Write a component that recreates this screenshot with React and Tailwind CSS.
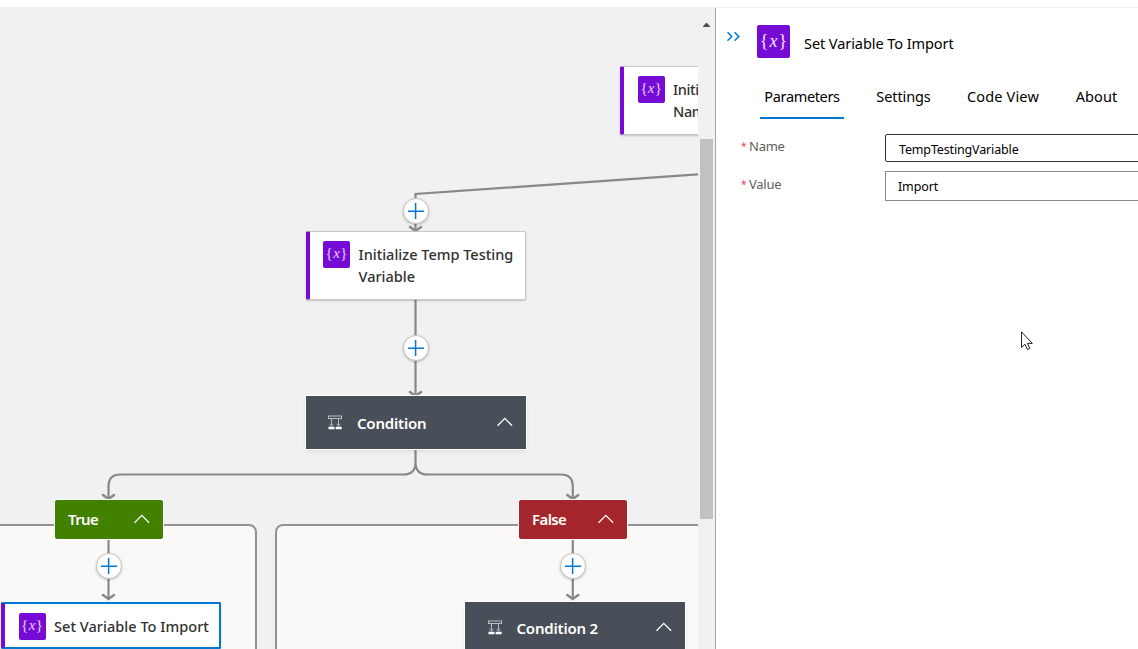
import React from 'react';

function VariableIcon({ large }) {
  return (
    <span
      className={
        large
          ? "flex h-[33px] w-[33px] shrink-0 items-center justify-center gap-[1px] rounded-[2px] bg-[#770bd6] pb-[2px] font-['Liberation_Serif',serif] text-[18px] leading-none text-white/90"
          : "flex h-[27px] w-[27px] shrink-0 items-center justify-center gap-[0.5px] rounded-[2px] bg-[#770bd6] pb-[2px] font-['Liberation_Serif',serif] text-[15px] leading-none text-white/80"
      }
    >
      <span>{'{'}</span><i>x</i><span>{'}'}</span>
    </span>
  );
}

function Chevron() {
  return (
    <svg width="16" height="10" viewBox="0 0 16 10" className="relative -top-px shrink-0" fill="none" stroke="#fff" strokeWidth="1.3">
      <path d="M.5 8.7 7.8 1.400l7.300 7.300" />
    </svg>
  );
}

function ConditionIcon() {
  return (
    <svg width="15" height="15" viewBox="0 0 15 15" className="shrink-0" fill="none" stroke="#b9bcc0" strokeWidth="1">
      <path d="M.5 1h13v2.500H.5z" strokeWidth="1.100" />
      <path d="M3.500 3.500v7M10.500 3.500v7M1.500 9.200l2 1.600 2-1.600M8.500 9.200l2 1.600 2-1.600" />
      <path d="M.5 11.800h6v2.500h-6zM7.700 11.800h6v2.500h-6z" fill="#fff" stroke="none" />
    </svg>
  );
}

function AddButton({ className }) {
  return (
    <button className={`absolute flex h-[26px] w-[26px] items-center justify-center rounded-full border border-[#c8c6c4] bg-white shadow-[0_1px_3px_rgba(0,0,0,.22)] ${className}`}>
      <svg width="16" height="16" viewBox="0 0 16 16" className="shrink-0" stroke="#0078d4" strokeWidth="1.500">
        <path d="M7.600 0v16M0 8.300h16" />
      </svg>
    </button>
  );
}

function ActionCard({ className, children }) {
  return (
    <div className={`absolute flex w-[220px] items-start rounded-[2px] border border-l-4 border-[#c6c6c6] border-l-[#770bd6] bg-white text-[14.500px] leading-[22px] font-medium text-[#323130] shadow-[0_1px_2px_rgba(0,0,0,.2)] ${className}`}>
      <VariableIcon />
      <span className="mt-[2px] ml-[8.500px] whitespace-nowrap">{children}</span>
    </div>
  );
}

function ConditionCard({ className, children }) {
  return (
    <div className={`absolute flex h-[53px] w-[220px] items-center bg-[#484f58] pr-[13px] text-[15px] font-semibold tracking-[-0.200px] text-white shadow-[0_0_0_1px_#fff,0_2px_4px_rgba(0,0,0,.1)] ${className}`}>
      <ConditionIcon />
      <span className="mt-px ml-[14px] flex-1 whitespace-nowrap">{children}</span>
      <Chevron />
    </div>
  );
}

function BranchCard({ className, children }) {
  return (
    <div className={`absolute flex h-[39px] w-[108px] items-center justify-between rounded-[2px] px-[13px] text-[15px] font-semibold tracking-[-0.600px] text-white shadow-[0_0_0_1px_#fff] ${className}`}>
      <span>{children}</span>
      <Chevron />
    </div>
  );
}

function Edges() {
  return (
    <svg className="absolute inset-0" width="698" height="642" viewBox="0 7 698 642" fill="none" stroke="#8a8886" strokeWidth="2.200">
      <path d="M698 174.300 415.500 194V230M415.500 300V395M415.500 450v12.500q0 12-12 12H120.500q-12 0-12 12v12M415.500 450v12.500q0 12 12 12H560.800q12 0 12 12v12M108.500 540v59M572.800 540v59" />
      <path d="m410 227 5.500 4 5.500-4M410 392l5.500 4 5.500-4M103 495l5.500 4 5.500-4M567.300 495l5.500 4 5.500-4M103 595l5.500 4 5.500-4M567.300 595l5.500 4 5.500-4" strokeWidth="2.500" strokeLinecap="round" />
    </svg>
  );
}

function Canvas() {
  return (
    <main className="relative h-[642px] w-[698px] shrink-0 overflow-hidden bg-[#f1f1f1]">
      <div className="absolute top-[517px] -left-[20px] h-[160px] w-[277px] rounded-[8px] border-2 border-[#949290] bg-[#faf9f8]" />
      <div className="absolute top-[517px] left-[275px] h-[160px] w-[460px] rounded-[8px] border-2 border-[#949290] bg-[#faf9f8]" />
      <Edges />
      <ActionCard className="top-[59px] left-[620px] h-[69px] pt-[9px] pl-[13.500px] tracking-[-0.350px]">Initialize<br />Name</ActionCard>
      <ActionCard className="top-[224px] left-[306px] h-[69px] pt-[9px] pl-[13px]">Initialize Temp Testing<br />Variable</ActionCard>
      <ConditionCard className="top-[389px] left-[306px] pl-[22px]">Condition</ConditionCard>
      <BranchCard className="top-[493px] left-[55px] bg-[#428000]">True</BranchCard>
      <BranchCard className="top-[493px] left-[519px] bg-[#a4262c]">False</BranchCard>
      <ActionCard className="top-[595px] left-[1px] h-[47px] border-y-2 border-r-2 border-y-[#0078d4] border-r-[#0078d4] pt-[9px] pl-[13.500px] tracking-[0.040px]">Set Variable To Import</ActionCard>
      <ConditionCard className="top-[595px] left-[465px] pb-[2px] pl-[22.500px]">Condition 2</ConditionCard>
      <AddButton className="top-[190.500px] left-[402.500px]" />
      <AddButton className="top-[328px] left-[402.500px]" />
      <AddButton className="top-[545.500px] left-[95.500px]" />
      <AddButton className="top-[545.500px] left-[559.500px]" />
    </main>
  );
}

function Scrollbar() {
  return (
    <div className="flex h-[642px] w-[17px] shrink-0 flex-col items-center bg-[#f1f1f1] pt-[16px]">
      <svg width="7" height="4" viewBox="0 0 7 4" className="shrink-0" fill="#505050">
        <path d="M3 0h1l3 3.200V4H0v-.8z" />
      </svg>
      <div className="mt-[112px] h-[380px] w-[13px] shrink-0 bg-[#c1c1c1]" />
    </div>
  );
}

function Field({ label, children }) {
  return (
    <>
      <span className="w-[8px] text-[10px] text-[#e04a5a]">*</span>
      <span className="w-[136px] text-[13px] tracking-[-0.250px] text-[#605e5c]">{label}</span>
      {children}
    </>
  );
}

function Panel() {
  return (
    <aside className="relative mt-px h-[641px] w-[423px] shrink-0 overflow-hidden border-l border-[#a6a6a6] bg-white text-black">
      <header className="flex h-[50px] items-start pt-[17px] pl-[11px]">
        <svg width="14" height="10" viewBox="0 0 14 10" className="mt-[6px] mr-[16px] shrink-0" fill="none" stroke="#0078d4" strokeWidth="1.500">
          <path d="m.5 1.300 4.300 4.200L.5 9.700M7.500 1.300l4.300 4.200-4.300 4.200" />
        </svg>
        <VariableIcon large />
        <h1 className="mt-[7px] ml-[14px] text-[14.500px] leading-[22px] tracking-[-0.070px] whitespace-nowrap">Set Variable To Import</h1>
      </header>
      <nav className="ml-[44px] flex h-[61px] items-end gap-[28px] text-[14.500px] leading-[20px] whitespace-nowrap">
        <span className="flex h-[33px] w-[84px] justify-center border-b-2 border-[#0078d4] tracking-[-0.350px]">Parameters</span>
        <span className="flex h-[33px] w-[63px] justify-center tracking-[-0.100px]">Settings</span>
        <span className="flex h-[33px] w-[80px] justify-center tracking-[0.150px]">Code View</span>
        <span className="flex h-[33px] w-[51px] justify-center tracking-[0.100px]">About</span>
      </nav>
      <div className="mt-[15px] ml-[25px] flex w-[420px] items-start leading-[24px]">
        <Field label="Name">
          <div className="h-[28px] w-[260px] rounded-[2px] border border-[#323130] pt-[3px] pl-[13px] text-[12.500px] tracking-[-0.150px]">TempTestingVariable</div>
        </Field>
      </div>
      <div className="mt-[9px] ml-[25px] flex w-[420px] items-start leading-[26px]">
        <Field label="Value">
          <div className="h-[30px] w-[260px] border border-[#8a8886] pt-[2px] pl-[12px] text-[12.500px] tracking-[-0.120px]">Import</div>
        </Field>
      </div>
      <svg width="12" height="20" viewBox="0 0 12 20" className="absolute top-[323px] left-[305px]" fill="#fff" stroke="#202030" strokeWidth="1">
        <path d="M.5.8v15.700l3.500-3.300 2.400 5.300 2.400-1-2.300-5.100h4.800z" />
      </svg>
    </aside>
  );
}

export default function App() {
  return (
    <div className="h-[649px] w-[1138px] overflow-hidden bg-white font-['Noto_Sans',sans-serif]">
      <div className="h-[7px]" />
      <div className="flex bg-[#f1f1f1]">
        <Canvas />
        <Scrollbar />
        <Panel />
      </div>
    </div>
  );
}
